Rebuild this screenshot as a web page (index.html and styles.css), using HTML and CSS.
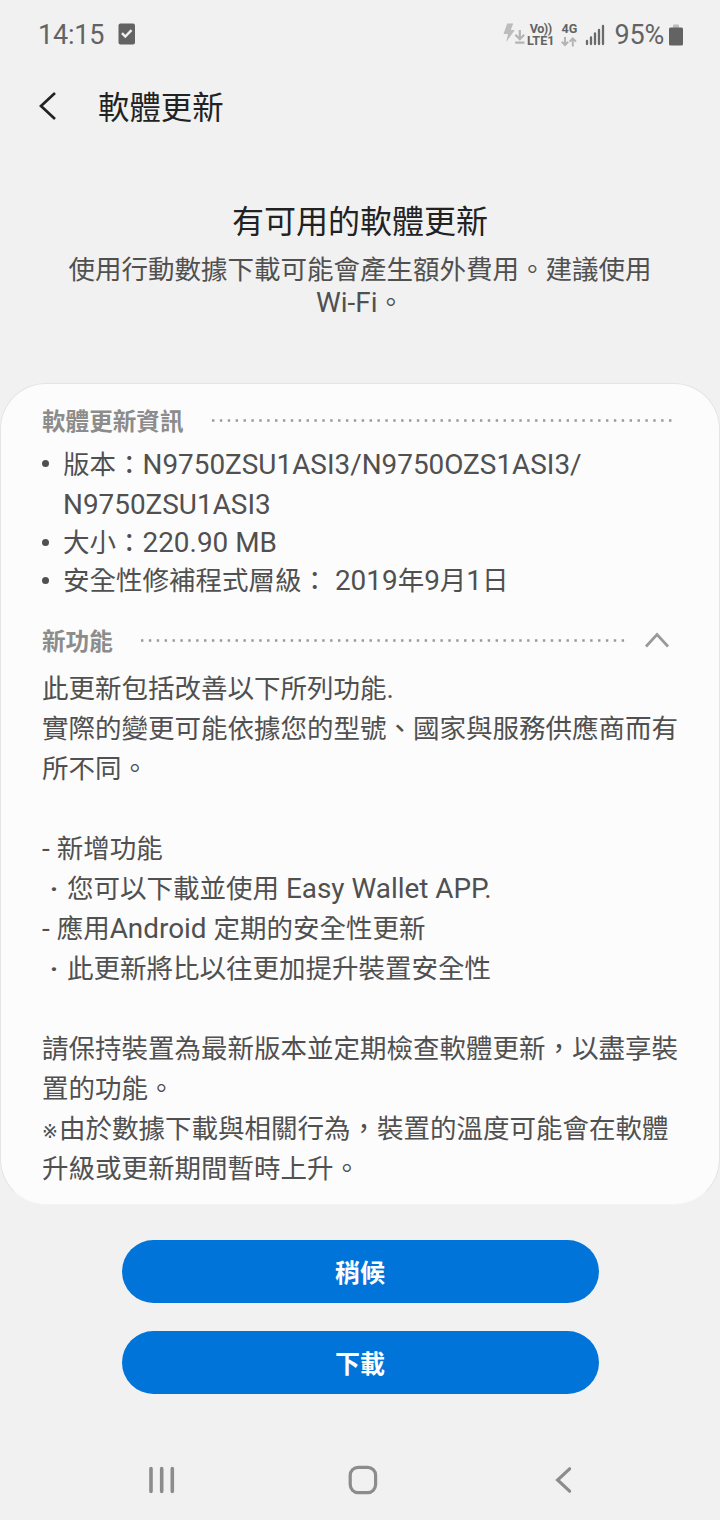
FILE: index.html
```
<!DOCTYPE html>
<html lang="zh-Hant">
<head>
    <meta charset="UTF-8">
    <title>軟體更新</title>
    <link rel="stylesheet" href="styles.css">
</head>
<body>
    <div class="status-bar">
        <div class="status-left">
            <span class="clock">14:15</span>
            <svg class="check-icon" width="18" height="22" viewBox="0 0 18 22">
                <rect x="0.5" y="0.5" width="16.5" height="21" rx="2" fill="#636363"/>
                <path d="M4 10.2l3.3 3.4 6.2-6.4" fill="none" stroke="#f1f1f1" stroke-width="2.4"/>
            </svg>
        </div>
        <div class="status-right">
            <svg width="24" height="24" viewBox="0 0 24 24">
                <path d="M4.2 0.5h6L7.8 7h4L3.2 19 5 11H0.5z" fill="#bcbcbc"/>
                <path d="M16.8 7v9M12.4 11.8l4.4 4.4 4.4-4.4M12.2 19.7h9.2" fill="none" stroke="#b4b4b4" stroke-width="2.2"/>
            </svg>
            <div class="volte">
                <span class="volte-top">Vo))</span>
                <span>LTE1</span>
            </div>
            <div class="network">
                <span>4G</span>
                <svg width="16" height="10" viewBox="0 0 16 10">
                    <path d="M4 0v8M0.8 4.8L4 8l3.2-3.2M11.8 9.5V1.3M8.6 4.6l3.2-3.2 3.2 3.2" fill="none" stroke="#b4b4b4" stroke-width="2"/>
                </svg>
            </div>
            <svg class="signal" width="20" height="22" viewBox="0 0 20 22">
                <path d="M2 17v3M6 13.5v6.5M10 9.5v10.5M14 6v14M18 2v18" fill="none" stroke="#6a6a6a" stroke-width="2.3" stroke-linecap="round"/>
            </svg>
            <span class="percent">95%</span>
            <svg class="battery" width="16" height="22" viewBox="0 0 16 22">
                <rect x="5" y="0.5" width="6" height="4" rx="1" fill="#bcbcbc"/>
                <rect x="1" y="3.5" width="14" height="18" rx="1.5" fill="#636363"/>
            </svg>
        </div>
    </div>

    <div class="header">
        <svg width="20" height="30" viewBox="0 0 20 30">
            <path d="M17 2L3 15l14 13" fill="none" stroke="#222" stroke-width="2.7"/>
        </svg>
        <h1>軟體更新</h1>
    </div>

    <div class="intro">
        <h2>有可用的軟體更新</h2>
        <p>使用行動數據下載可能會產生額外費用。建議使用<br><span class="en">Wi-Fi</span>。</p>
    </div>

    <div class="card">
        <div class="section-title">
            <h3>軟體更新資訊</h3>
            <svg class="dots" height="3"><line x1="0" y1="1.5" x2="100%" y2="1.5"/></svg>
        </div>
        <ul class="info-list">
            <li class="version">版本：<span class="en">N9750ZSU1ASI3/N9750OZS1ASI3/<br>N9750ZSU1ASI3</span></li>
            <li>大小：<span class="en">220.90 MB</span></li>
            <li>安全性修補程式層級：<span class="en"> 2019</span>年<span class="en">9</span>月<span class="en">1</span>日</li>
        </ul>
        <div class="section-title features-title">
            <h3>新功能</h3>
            <svg class="dots" height="3"><line x1="0" y1="1.5" x2="100%" y2="1.5"/></svg>
            <svg class="arrow" width="26" height="16" viewBox="0 0 26 16">
                <path d="M2 14.5l11-12 11 12" fill="none" stroke="#999" stroke-width="2.7"/>
            </svg>
        </div>
        <div class="features">
            <p>此更新包括改善以下所列功能<span class="en">.</span><br>實際的變更可能依據您的型號、國家與服務供應商而有<br>所不同。</p>
            <p><span class="en">- </span>新增功能<br><span class="dot">·</span>您可以下載並使用<span class="en"> Easy Wallet APP.</span><br><span class="en">- </span>應用<span class="en">Android </span>定期的安全性更新<br><span class="dot">·</span>此更新將比以往更加提升裝置安全性</p>
            <p>請保持裝置為最新版本並定期檢查軟體更新，以盡享裝<br>置的功能。<br><span class="note">※</span>由於數據下載與相關行為，裝置的溫度可能會在軟體<br>升級或更新期間暫時上升。</p>
        </div>
    </div>

    <div class="button-container">
        <button class="primary-button">稍候</button>
        <button class="primary-button">下載</button>
    </div>

    <div class="nav-bar">
        <svg width="30" height="30" viewBox="0 0 30 30">
            <path d="M4 3.5v23M14.7 3.5v23M25.3 3.5v23" fill="none" stroke="#8c8c8c" stroke-width="3.6" stroke-linecap="round"/>
        </svg>
        <svg width="30" height="30" viewBox="0 0 30 30">
            <rect x="2.2" y="2.4" width="25.4" height="25.2" rx="8" fill="none" stroke="#8c8c8c" stroke-width="3.2"/>
        </svg>
        <svg width="30" height="30" viewBox="0 0 30 30">
            <path d="M20.6 3.8L8.6 15l12 11.2" fill="none" stroke="#8c8c8c" stroke-width="3.2" stroke-linecap="round"/>
        </svg>
    </div>
</body>
</html>
```

FILE: styles.css
```
* {
    box-sizing: border-box;
}
body {
    font-family: Roboto, "Noto Sans CJK TC", sans-serif;
    margin: 0;
    height: 1520px;
    background-color: #f1f1f1;
    color: #505050;
    font-size: 26.5px;
    white-space: nowrap;
    display: flex;
    flex-direction: column;
}
h1, h2, h3, p, ul {
    margin: 0;
    padding: 0;
    font-weight: 400;
}
svg {
    display: block;
    flex-shrink: 0;
}
/* latin text runs a bit larger than the chinese */
.en {
    font-size: 27.9px;
}
.status-bar {
    height: 70px;
    padding: 0 36px 0 38px;
    display: flex;
    justify-content: space-between;
    align-items: center;
    color: #636363;
}
.status-left, .status-right {
    display: flex;
    align-items: center;
}
.clock {
    font-size: 27px;
    letter-spacing: -0.2px;
    margin-top: -1px;
}
.check-icon {
    margin-left: 14px;
    margin-top: -2px;
}
.volte, .network {
    display: flex;
    flex-direction: column;
    font-size: 12.6px;
    line-height: 12px;
    font-weight: 700;
    align-items: center;
}
.volte-top {
    letter-spacing: -0.5px;
}
.network {
    margin-left: 7px;
}
.network svg {
    margin-top: 2px;
}
.signal {
    margin-left: 8px;
}
.percent {
    font-size: 27px;
    letter-spacing: -0.2px;
    margin-left: 9px;
}
.battery {
    margin-left: 4px;
}
.header {
    height: 72px;
    padding-left: 38px;
    display: flex;
    align-items: center;
}
.header h1 {
    font-size: 31.4px;
    margin-left: 40px;
    margin-top: -1px;
    color: #222;
}
.intro {
    height: 241px;
    padding-top: 57px;
    text-align: center;
}
.intro h2 {
    font-size: 32px;
    line-height: 46px;
    color: #222;
}
.intro p {
    margin-top: 8px;
    line-height: 33px;
}
.card {
    height: 822px;
    padding: 16px 42px 0 41px;
    background-color: #fcfcfc;
    border: 1px solid #e4e4e4;
    border-bottom-color: #f4f4f4;
    border-radius: 46px;
}
.section-title {
    height: 40px;
    display: flex;
    align-items: center;
    color: #8c8c8c;
}
.section-title h3 {
    font-size: 23.6px;
    font-weight: 700;
}
.dots {
    flex: 1;
    min-width: 0;
    margin-left: 28px;
    margin-right: 4px;
}
.dots line {
    stroke: #999;
    stroke-width: 2.4;
    stroke-dasharray: 2.4 5.48;
}
.arrow {
    margin-left: 14px;
    margin-right: 7px;
}
.info-list {
    list-style: none;
    margin-top: 5px;
}
.info-list li {
    position: relative;
    padding-left: 21px;
    height: 38px;
    line-height: 38px;
}
.info-list .version {
    height: 79px;
    line-height: 40px;
}
.info-list li::before {
    content: "";
    position: absolute;
    left: 0;
    top: 15px;
    width: 7px;
    height: 7px;
    border-radius: 50%;
    background-color: #505050;
}
.features-title {
    margin-top: 20px;
}
.features {
    margin-top: 9px;
    line-height: 40px;
}
.features p {
    margin-bottom: 40px;
}
.features .en, .intro .en, .note, .dot {
    line-height: 1;
}
.dot {
    display: inline-block;
    width: 25px;
    padding-left: 8px;
    font-weight: 700;
}
.note {
    display: inline-block;
    width: 17px;
    font-family: "DejaVu Sans", sans-serif;
    font-size: 19px;
}
.button-container {
    padding-top: 35px;
    display: flex;
    flex-direction: column;
    align-items: center;
    gap: 28px;
}
.primary-button {
    width: 477px;
    height: 63px;
    padding: 0 0 2px;
    border: none;
    border-radius: 32px;
    background-color: #0074d8;
    color: white;
    font-family: inherit;
    font-size: 25px;
    font-weight: 700;
}
.nav-bar {
    margin-top: auto;
    height: 80px;
    padding: 0 141px 0 147px;
    display: flex;
    justify-content: space-between;
    align-items: center;
}
```
